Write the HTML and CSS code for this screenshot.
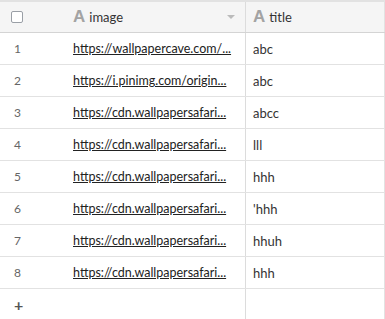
FILE: index.html
```html
<!DOCTYPE html>
<html lang="en">
<head>
    <meta charset="UTF-8">
    <title>grid</title>
    <link rel="stylesheet" href="styles.css">
</head>
<body>
    <div class="grid">
        <div class="row head">
            <div class="cell num"><span class="check"></span></div>
            <div class="cell col-image">
                <span class="type">A</span>
                <span class="name">image</span>
                <span class="caret"></span>
            </div>
            <div class="cell col-title">
                <span class="type">A</span>
                <span class="name">title</span>
            </div>
        </div>
        <div class="row"><div class="cell num">1</div><div class="cell col-image"><a href="#">https://wallpapercave.com/...</a></div><div class="cell col-title">abc</div></div>
        <div class="row"><div class="cell num">2</div><div class="cell col-image"><a href="#">https://i.pinimg.com/origin...</a></div><div class="cell col-title">abc</div></div>
        <div class="row"><div class="cell num">3</div><div class="cell col-image"><a href="#">https://cdn.wallpapersafari...</a></div><div class="cell col-title">abcc</div></div>
        <div class="row"><div class="cell num">4</div><div class="cell col-image"><a href="#">https://cdn.wallpapersafari...</a></div><div class="cell col-title">lll</div></div>
        <div class="row"><div class="cell num">5</div><div class="cell col-image"><a href="#">https://cdn.wallpapersafari...</a></div><div class="cell col-title">hhh</div></div>
        <div class="row"><div class="cell num">6</div><div class="cell col-image"><a href="#">https://cdn.wallpapersafari...</a></div><div class="cell col-title">'hhh</div></div>
        <div class="row"><div class="cell num">7</div><div class="cell col-image"><a href="#">https://cdn.wallpapersafari...</a></div><div class="cell col-title">hhuh</div></div>
        <div class="row"><div class="cell num">8</div><div class="cell col-image"><a href="#">https://cdn.wallpapersafari...</a></div><div class="cell col-title">hhh</div></div>
        <div class="row add">
            <div class="cell num plus">+</div>
            <div class="cell col-image"></div>
            <div class="cell col-title"></div>
        </div>
    </div>
</body>
</html>
```

FILE: styles.css
```css
body {
    margin: 0;
    padding: 0;
    background-color: #fff;
    font-family: Lato, "Open Sans", sans-serif;
    font-size: 13px;
    color: #333;
}
.grid {
    width: 385px;
    height: 319px;
    border-top: 2px solid #e2e2e2;
    box-sizing: border-box;
    display: flex;
    flex-direction: column;
    overflow: hidden;
}
.row {
    display: grid;
    grid-template-columns: 63px 183px 139px;
    height: 32px;
    border-bottom: 1px solid #e2e2e2;
    box-sizing: border-box;
}
.row.head {
    height: 31px;
    background-color: #f5f5f5;
    border-bottom: 1px solid #d4d4d4;
}
.row.add {
    flex: 1;
    border-bottom: none;
}
.cell {
    display: flex;
    align-items: center;
    padding: 0 2px 0 10px;
    white-space: nowrap;
    overflow: hidden;
}
.num {
    padding-left: 14px;
    color: #666;
    font-size: 12px;
}
.col-image {
    border-right: 1px solid #dcdcdc;
}
.head .col-image {
    padding-right: 10px;
}
.col-title {
    padding-left: 7px;
    border-right: 1px solid #e2e2e2;
}
.check {
    width: 10px;
    height: 10px;
    margin-left: -3px;
    border: 1px solid #9a9fa6;
    border-radius: 2px;
    background-color: #fff;
}
.type {
    font-family: "Liberation Sans", Arial, sans-serif;
    font-weight: bold;
    font-size: 17px;
    color: #a3a3a3;
    margin-right: 4px;
}
.name {
    flex: 1;
    color: #333;
}
.caret {
    width: 0;
    height: 0;
    border-left: 4px solid transparent;
    border-right: 4px solid transparent;
    border-top: 4px solid #bbb;
}
a {
    font-size: 12.5px;
    color: #222;
    text-decoration: underline;
}
.row.add .cell {
    align-items: flex-start;
}
.row.add .num {
    padding-top: 6px;
}
.plus {
    font-size: 16px;
    font-weight: bold;
    color: #555;
}
```
